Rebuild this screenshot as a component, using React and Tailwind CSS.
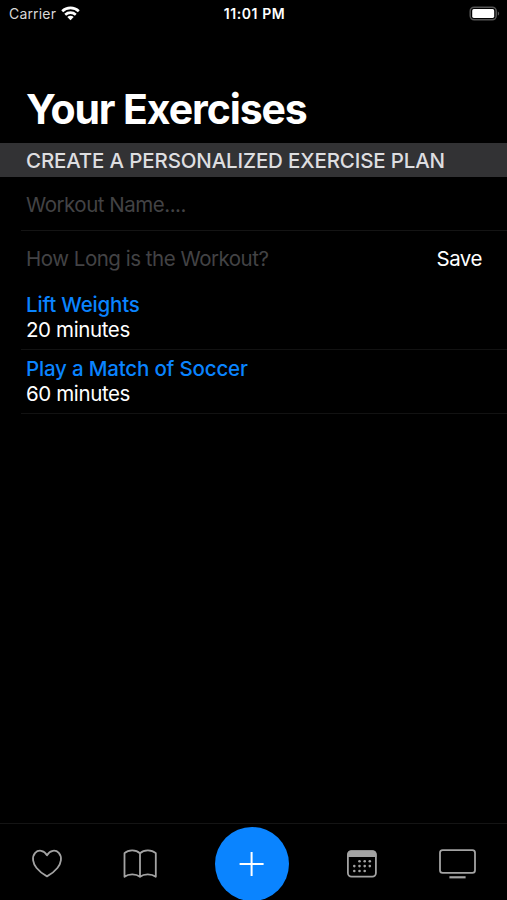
import { useState } from "react";

const initialExercises = [
  { id: 1, name: "Lift Weights", minutes: 20 },
  { id: 2, name: "Play a Match of Soccer", minutes: 60 },
];

// calendar day dots, [x, y]
const dots = [
  [16.5, 16.3], [21.7, 16.3], [26.8, 16.3],
  [11.3, 21.1], [16.5, 21.1], [21.7, 21.1], [26.8, 21.1],
  [11.3, 26], [16.5, 26], [21.7, 26],
];

function StatusBar() {
  return (
    <div className="grid h-7 grid-cols-3 items-center pl-[9px] pr-[7px] text-[14px] leading-none">
      <div className="flex items-center gap-[5px] text-[#d8d8d8]">
        <span className="tracking-[0.18px]">Carrier</span>
        <svg width="19" height="15" viewBox="0 0 19 15" className="-mt-0.5">
          <g fill="none" stroke="#fff" strokeWidth="2.6">
            <path d="M1.2 5.2C5.8 0.7 13.2 0.7 17.8 5.2" />
            <path d="M4.2 8.7C7.2 5.9 11.8 5.9 14.8 8.7" />
          </g>
          <path d="M9.5 14.2L6.3 11C8.1 9.3 10.9 9.3 12.7 11Z" fill="#fff" />
        </svg>
      </div>
      <div className="text-center font-semibold tracking-[0.6px]">11:01 PM</div>
      <svg width="31" height="16" viewBox="0 0 31 16" className="-mt-px justify-self-end">
        <rect x="1.2" y="1.2" width="26" height="12.6" rx="4" fill="none" stroke="#555" strokeWidth="1.5" />
        <rect x="3.2" y="3.1" width="22" height="8.8" rx="1.6" fill="#fff" />
        <path d="M28.8 5.4C30.6 6 30.6 9 28.8 9.6Z" fill="#555" />
      </svg>
    </div>
  );
}

function ExerciseRow({ item }) {
  return (
    <div className="ml-[21px] h-16 border-b border-[#121212] pl-[5px] pt-[6px] text-[20.5px] leading-[25px]">
      <div className="font-medium tracking-[-0.18px] text-[#0a84ff]">{item.name}</div>
      <div className="tracking-[-0.38px]">{item.minutes} minutes</div>
    </div>
  );
}

function TabBar() {
  return (
    <nav className="flex h-[77px] items-center justify-between border-t border-[#141414] pl-[27px] pr-[30px] pt-[4px] text-[#a3a3a3]">
      <button aria-label="Favorites">
        <svg width="40" height="38" viewBox="0 0 40 38" fill="none" stroke="currentColor" strokeWidth="1.8">
          <path d="M20 10.2C17 4.8 11.2 4.6 8.2 7.8C4.4 12 6 18.6 9.6 23C12.4 26.4 16.4 29.5 20 31.4C23.6 29.5 27.6 26.4 30.4 23C34 18.6 35.6 12 31.8 7.8C28.8 4.6 23 4.8 20 10.2Z" strokeLinejoin="round" />
        </svg>
      </button>
      <button aria-label="Library">
        <svg width="40" height="38" viewBox="0 0 40 38" fill="none" stroke="currentColor" strokeWidth="1.8" strokeLinejoin="round">
          <path d="M19 8.4C15 4.4 7.5 4.4 3.5 8.2V31.8C7.5 28.6 15 28.6 19 31.8C23 28.6 30.5 28.6 34.8 31.8V8.2C30.5 4.4 23 4.4 19 8.4ZM19 8.4V31.8" />
        </svg>
      </button>
      <button aria-label="Add" className="flex size-[74px] shrink-0 items-center justify-center rounded-full bg-[#0a84ff]">
        <svg width="26" height="26" viewBox="0 0 26 26" stroke="#fff" strokeWidth="2">
          <path d="M12.6 1V25M0.6 13H24.6" />
        </svg>
      </button>
      <button aria-label="Calendar">
        <svg width="40" height="38" viewBox="0 0 40 38">
          <rect x="4.9" y="6.2" width="28" height="25.4" rx="3.6" fill="none" stroke="currentColor" strokeWidth="1.8" />
          <path d="M4.5 12V9Q4.5 5.5 8.2 5.5H29.8Q33.4 5.5 33.4 9V12Z" fill="currentColor" />
          {dots.map(([x, y]) => (
            <circle key={`${x}-${y}`} cx={x} cy={y} r="1.3" fill="currentColor" />
          ))}
        </svg>
      </button>
      <button aria-label="TV">
        <svg width="40" height="38" viewBox="0 0 40 38" fill="none" stroke="currentColor" strokeWidth="1.8">
          <rect x="3" y="5.2" width="35" height="22.6" rx="2.6" />
          <path d="M12.4 32.3H28.6" strokeWidth="2.2" />
        </svg>
      </button>
    </nav>
  );
}

export default function App() {
  const [exercises, setExercises] = useState(initialExercises);
  const [name, setName] = useState("");
  const [minutes, setMinutes] = useState("");

  const onSave = (e) => {
    e.preventDefault();
    if (!name.trim() || !Number(minutes)) return;

    setExercises([
      ...exercises,
      { id: Date.now(), name: name.trim(), minutes: Number(minutes) },
    ]);
    setName("");
    setMinutes("");
  };

  return (
    <div className="flex h-[900px] w-[507px] flex-col overflow-hidden bg-black font-['Inter',sans-serif] text-white">
      <StatusBar />

      <h1 className="mt-[56px] h-[59px] pl-[26px] text-[41px] font-bold leading-[50px] tracking-[-1.1px]">
        Your Exercises
      </h1>

      <h2 className="h-[34px] bg-[#323234] pl-[26px] text-[20.5px] font-medium leading-[35px] tracking-[-0.15px] text-[#dedee0]">
        CREATE A PERSONALIZED EXERCISE PLAN
      </h2>

      <form onSubmit={onSave} className="text-[20.5px] tracking-[-0.48px]">
        <div className="ml-[21px] h-[54px] border-b border-[#141414] pl-[5px] pt-px">
          <input
            className="h-full w-full bg-transparent outline-none placeholder:text-[#434345]"
            placeholder="Workout Name...."
            value={name}
            onChange={(e) => setName(e.target.value)}
          />
        </div>
        <div className="flex h-[55px] items-center pl-[26px] pr-[25px]">
          <input
            className="h-full min-w-0 flex-1 bg-transparent pb-px outline-none placeholder:text-[#434345]"
            placeholder="How Long is the Workout?"
            value={minutes}
            onChange={(e) => setMinutes(e.target.value)}
          />
          <button type="submit" className="pt-px">Save</button>
        </div>
      </form>

      {/* Saved exercises */}
      <div className="min-h-0 flex-1 overflow-hidden">
        {exercises.map((item) => (
          <ExerciseRow key={item.id} item={item} />
        ))}
      </div>

      <TabBar />
    </div>
  );
}
